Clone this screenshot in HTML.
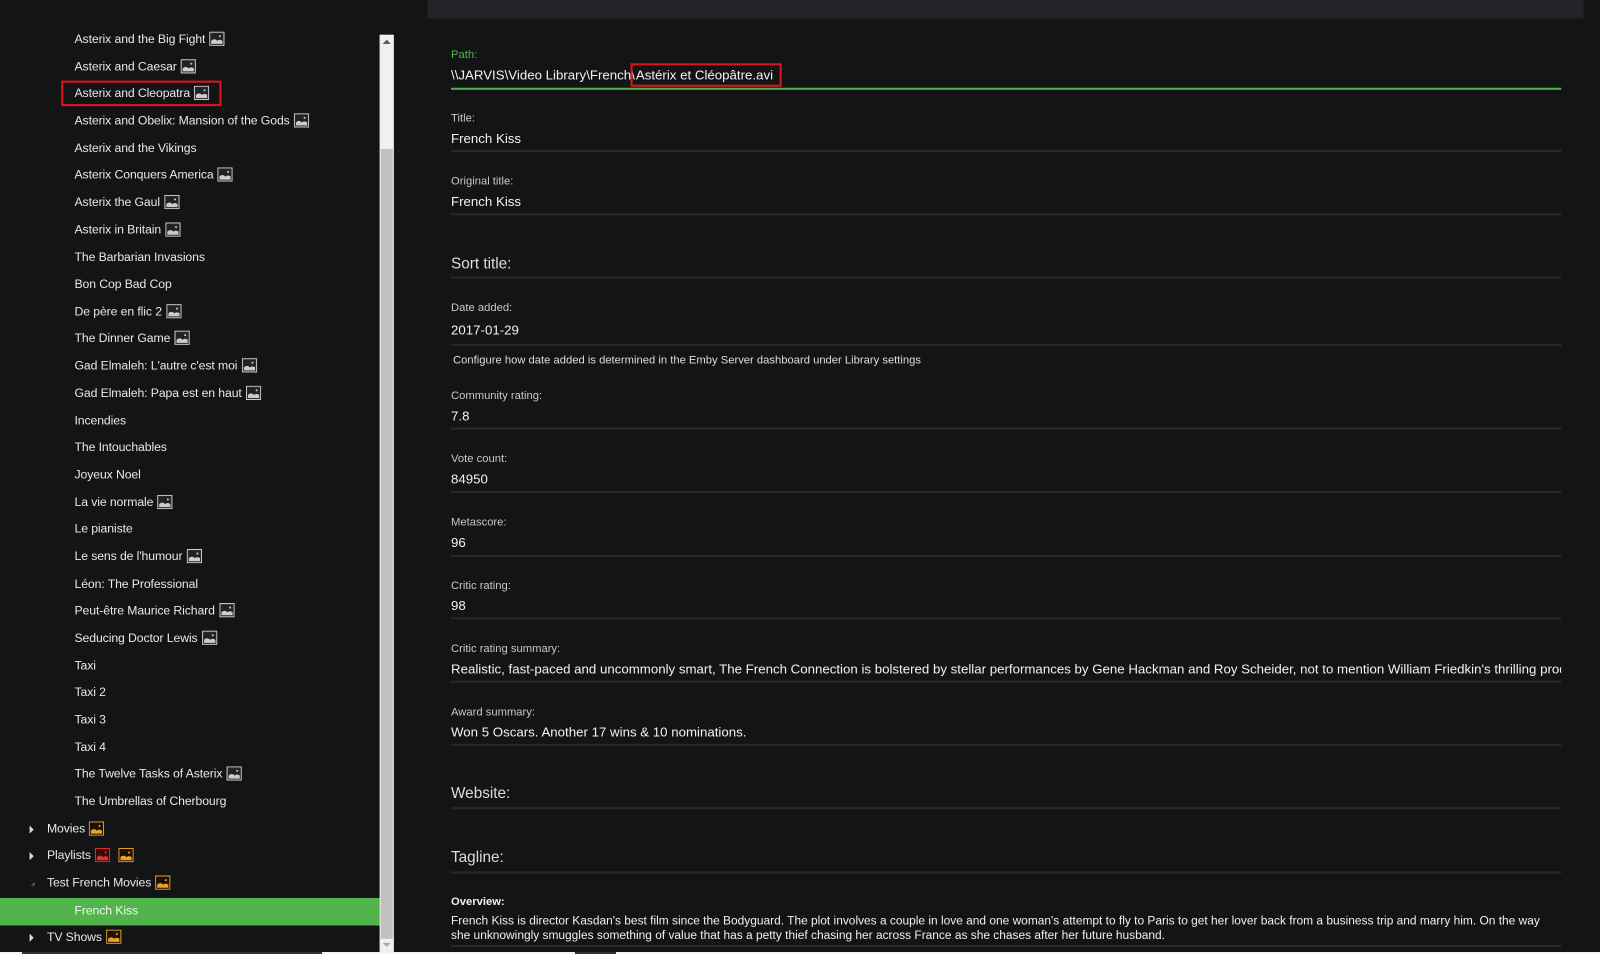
<!DOCTYPE html>
<html><head><meta charset="utf-8"><style>
*{margin:0;padding:0;box-sizing:border-box}
body{width:1600px;height:954px;background:#131416;font-family:"Liberation Sans",Arial,sans-serif;color:#eee;position:relative;overflow:hidden}
#w{position:absolute;left:0;top:0;width:1570px;height:935px;transform:scale(1.0204);transform-origin:0 0}
.it{position:absolute;font-size:12px;line-height:16px;color:#e8e8e8;white-space:nowrap;letter-spacing:-0.1px}
.ic{display:inline-block;vertical-align:-3px;margin-left:4px}
.arr{position:absolute;left:29px;width:0;height:0;border-left:4px solid #ddd;border-top:4px solid transparent;border-bottom:4px solid transparent}
.lbl{position:absolute;left:442px;font-size:11px;color:#c8c8c8;line-height:14px}
.val{position:absolute;left:442px;font-size:13px;color:#f2f2f2;line-height:16px;white-space:nowrap}
.big{position:absolute;left:442px;font-size:15px;color:#ddd;line-height:18px}
.ln{position:absolute;left:442px;width:1088px;height:2px;background:#29292b}
</style></head><body>
<div id="w">
<div style="position:absolute;left:419px;top:0;width:1133px;height:18px;background:#222326"></div>

<div style="position:absolute;left:0;top:880px;width:372px;height:27px;background:#52b54b"></div>

<svg width="0" height="0" style="position:absolute"><defs>
<symbol id="g" viewBox="0 0 15 14"><rect x="0.5" y="0.5" width="14" height="13" fill="#2a2a2a" stroke="#ccc"/><rect x="2" y="2" width="11" height="10" fill="#222"/><path d="M2 12 L2 9 Q5 6 8 9 Q10 7 13 9 L13 12Z" fill="#ccc"/><circle cx="10.5" cy="4.5" r="1" fill="#ccc"/></symbol>
<symbol id="o" viewBox="0 0 15 14"><rect x="0.5" y="0.5" width="14" height="13" fill="#1a1206" stroke="#f0a020"/><path d="M2 12 L2 9 Q5 6 8 9 Q10 7 13 9 L13 12Z" fill="#f0a020"/><circle cx="10.5" cy="4.5" r="1" fill="#f0a020"/></symbol>
<symbol id="r" viewBox="0 0 15 14"><rect x="0.5" y="0.5" width="14" height="13" fill="#3a0a0a" stroke="#e03030"/><path d="M2 12 L2 9 Q5 6 8 9 Q10 7 13 9 L13 12Z" fill="#e03030"/><circle cx="10.5" cy="4.5" r="1" fill="#e03030"/></symbol>
</defs></svg>

<div class="it" style="left:73px;top:30px">Asterix and the Big Fight<svg class="ic" width="15" height="14"><use href="#g"/></svg></div>
<div class="it" style="left:73px;top:57px">Asterix and Caesar<svg class="ic" width="15" height="14"><use href="#g"/></svg></div>
<div class="it" style="left:73px;top:83px">Asterix and Cleopatra<svg class="ic" width="15" height="14"><use href="#g"/></svg></div>
<div style="position:absolute;left:60px;top:79px;width:157px;height:25px;border:2px solid #e0141e"></div>
<div class="it" style="left:73px;top:110px">Asterix and Obelix: Mansion of the Gods<svg class="ic" width="15" height="14"><use href="#g"/></svg></div>
<div class="it" style="left:73px;top:137px">Asterix and the Vikings</div>
<div class="it" style="left:73px;top:163px">Asterix Conquers America<svg class="ic" width="15" height="14"><use href="#g"/></svg></div>
<div class="it" style="left:73px;top:190px">Asterix the Gaul<svg class="ic" width="15" height="14"><use href="#g"/></svg></div>
<div class="it" style="left:73px;top:217px">Asterix in Britain<svg class="ic" width="15" height="14"><use href="#g"/></svg></div>
<div class="it" style="left:73px;top:244px">The Barbarian Invasions</div>
<div class="it" style="left:73px;top:270px">Bon Cop Bad Cop</div>
<div class="it" style="left:73px;top:297px">De père en flic 2<svg class="ic" width="15" height="14"><use href="#g"/></svg></div>
<div class="it" style="left:73px;top:323px">The Dinner Game<svg class="ic" width="15" height="14"><use href="#g"/></svg></div>
<div class="it" style="left:73px;top:350px">Gad Elmaleh: L'autre c'est moi<svg class="ic" width="15" height="14"><use href="#g"/></svg></div>
<div class="it" style="left:73px;top:377px">Gad Elmaleh: Papa est en haut<svg class="ic" width="15" height="14"><use href="#g"/></svg></div>
<div class="it" style="left:73px;top:404px">Incendies</div>
<div class="it" style="left:73px;top:430px">The Intouchables</div>
<div class="it" style="left:73px;top:457px">Joyeux Noel</div>
<div class="it" style="left:73px;top:484px">La vie normale<svg class="ic" width="15" height="14"><use href="#g"/></svg></div>
<div class="it" style="left:73px;top:510px">Le pianiste</div>
<div class="it" style="left:73px;top:537px">Le sens de l'humour<svg class="ic" width="15" height="14"><use href="#g"/></svg></div>
<div class="it" style="left:73px;top:564px">Léon: The Professional</div>
<div class="it" style="left:73px;top:590px">Peut-être Maurice Richard<svg class="ic" width="15" height="14"><use href="#g"/></svg></div>
<div class="it" style="left:73px;top:617px">Seducing Doctor Lewis<svg class="ic" width="15" height="14"><use href="#g"/></svg></div>
<div class="it" style="left:73px;top:644px">Taxi</div>
<div class="it" style="left:73px;top:670px">Taxi 2</div>
<div class="it" style="left:73px;top:697px">Taxi 3</div>
<div class="it" style="left:73px;top:724px">Taxi 4</div>
<div class="it" style="left:73px;top:750px">The Twelve Tasks of Asterix<svg class="ic" width="15" height="14"><use href="#g"/></svg></div>
<div class="it" style="left:73px;top:777px">The Umbrellas of Cherbourg</div>

<div class="arr" style="top:809px"></div>
<div class="it" style="left:46px;top:804px">Movies<svg class="ic" width="15" height="14"><use href="#o"/></svg></div>
<div class="arr" style="top:835px"></div>
<div class="it" style="left:46px;top:830px">Playlists<svg class="ic" width="15" height="14"><use href="#r"/></svg><svg class="ic" style="margin-left:8px" width="15" height="14"><use href="#o"/></svg></div>
<div style="position:absolute;left:30px;top:864px;width:0;height:0;border-right:4px solid #555;border-top:4px solid transparent"></div>
<div class="it" style="left:46px;top:857px">Test French Movies<svg class="ic" width="15" height="14"><use href="#o"/></svg></div>
<div class="it" style="left:73px;top:884px;color:#f4f4f4">French Kiss</div>
<div class="arr" style="top:915px"></div>
<div class="it" style="left:46px;top:910px">TV Shows<svg class="ic" width="15" height="14"><use href="#o"/></svg></div>

<div style="position:absolute;left:372px;top:34px;width:14px;height:900px;background:#f0f0f0"></div>
<div style="position:absolute;left:373px;top:146px;width:12px;height:774px;background:#c1c1c1"></div>
<div style="position:absolute;left:375px;top:39px;width:0;height:0;border-left:4px solid transparent;border-right:4px solid transparent;border-bottom:4px solid #555"></div>
<div style="position:absolute;left:375px;top:924px;width:0;height:0;border-left:4px solid transparent;border-right:4px solid transparent;border-top:4px solid #aaa"></div>

<div class="lbl" style="top:47px;color:#52b54b">Path:</div>
<div class="val" style="top:66px">\\JARVIS\Video Library\French\<span style="outline:2px solid #e0141e;outline-offset:2px;padding:0 4px 0 1px">Astérix et Cléopâtre.avi</span></div>
<div class="ln" style="top:86px;background:#52b54b"></div>

<div class="lbl" style="top:109px">Title:</div>
<div class="val" style="top:128px">French Kiss</div>
<div class="ln" style="top:147px"></div>

<div class="lbl" style="top:171px">Original title:</div>
<div class="val" style="top:190px">French Kiss</div>
<div class="ln" style="top:209px"></div>

<div class="big" style="top:250px">Sort title:</div>
<div class="ln" style="top:271px"></div>

<div class="lbl" style="top:295px">Date added:</div>
<div class="val" style="top:316px">2017-01-29</div>
<div class="ln" style="top:337px"></div>
<div class="lbl" style="top:346px;left:444px;color:#ddd">Configure how date added is determined in the Emby Server dashboard under Library settings</div>

<div class="lbl" style="top:381px">Community rating:</div>
<div class="val" style="top:400px">7.8</div>
<div class="ln" style="top:419px"></div>

<div class="lbl" style="top:443px">Vote count:</div>
<div class="val" style="top:462px">84950</div>
<div class="ln" style="top:481px"></div>

<div class="lbl" style="top:505px">Metascore:</div>
<div class="val" style="top:524px">96</div>
<div class="ln" style="top:544px"></div>

<div class="lbl" style="top:567px">Critic rating:</div>
<div class="val" style="top:586px">98</div>
<div class="ln" style="top:605px"></div>

<div class="lbl" style="top:629px">Critic rating summary:</div>
<div class="val" style="top:648px;width:1088px;overflow:hidden">Realistic, fast-paced and uncommonly smart, The French Connection is bolstered by stellar performances by Gene Hackman and Roy Scheider, not to mention William Friedkin's thrilling production.</div>
<div class="ln" style="top:667px"></div>

<div class="lbl" style="top:691px">Award summary:</div>
<div class="val" style="top:710px">Won 5 Oscars. Another 17 wins &amp; 10 nominations.</div>
<div class="ln" style="top:729px"></div>

<div class="big" style="top:769px">Website:</div>
<div class="ln" style="top:791px"></div>

<div class="big" style="top:832px">Tagline:</div>
<div class="ln" style="top:854px"></div>

<div class="lbl" style="top:877px;color:#f0f0f0;font-weight:bold">Overview:</div>
<div style="position:absolute;left:442px;top:896px;width:1080px;font-size:11.7px;line-height:14px;color:#f0f0f0">French Kiss is director Kasdan's best film since the Bodyguard. The plot involves a couple in love and one woman's attempt to fly to Paris to get her lover back from a business trip and marry him. On the way she unknowingly smuggles something of value that has a petty thief chasing her across France as she chases after her future husband.</div>
<div class="ln" style="top:926px"></div>
</div>
<div style="position:absolute;left:0;top:952px;width:1600px;height:2px;background:#f4f4f4"></div>
<div style="position:absolute;left:22px;top:952px;width:300px;height:2px;background:#333"></div>
<div style="position:absolute;left:575px;top:952px;width:41px;height:2px;background:#333"></div>
</body></html>
